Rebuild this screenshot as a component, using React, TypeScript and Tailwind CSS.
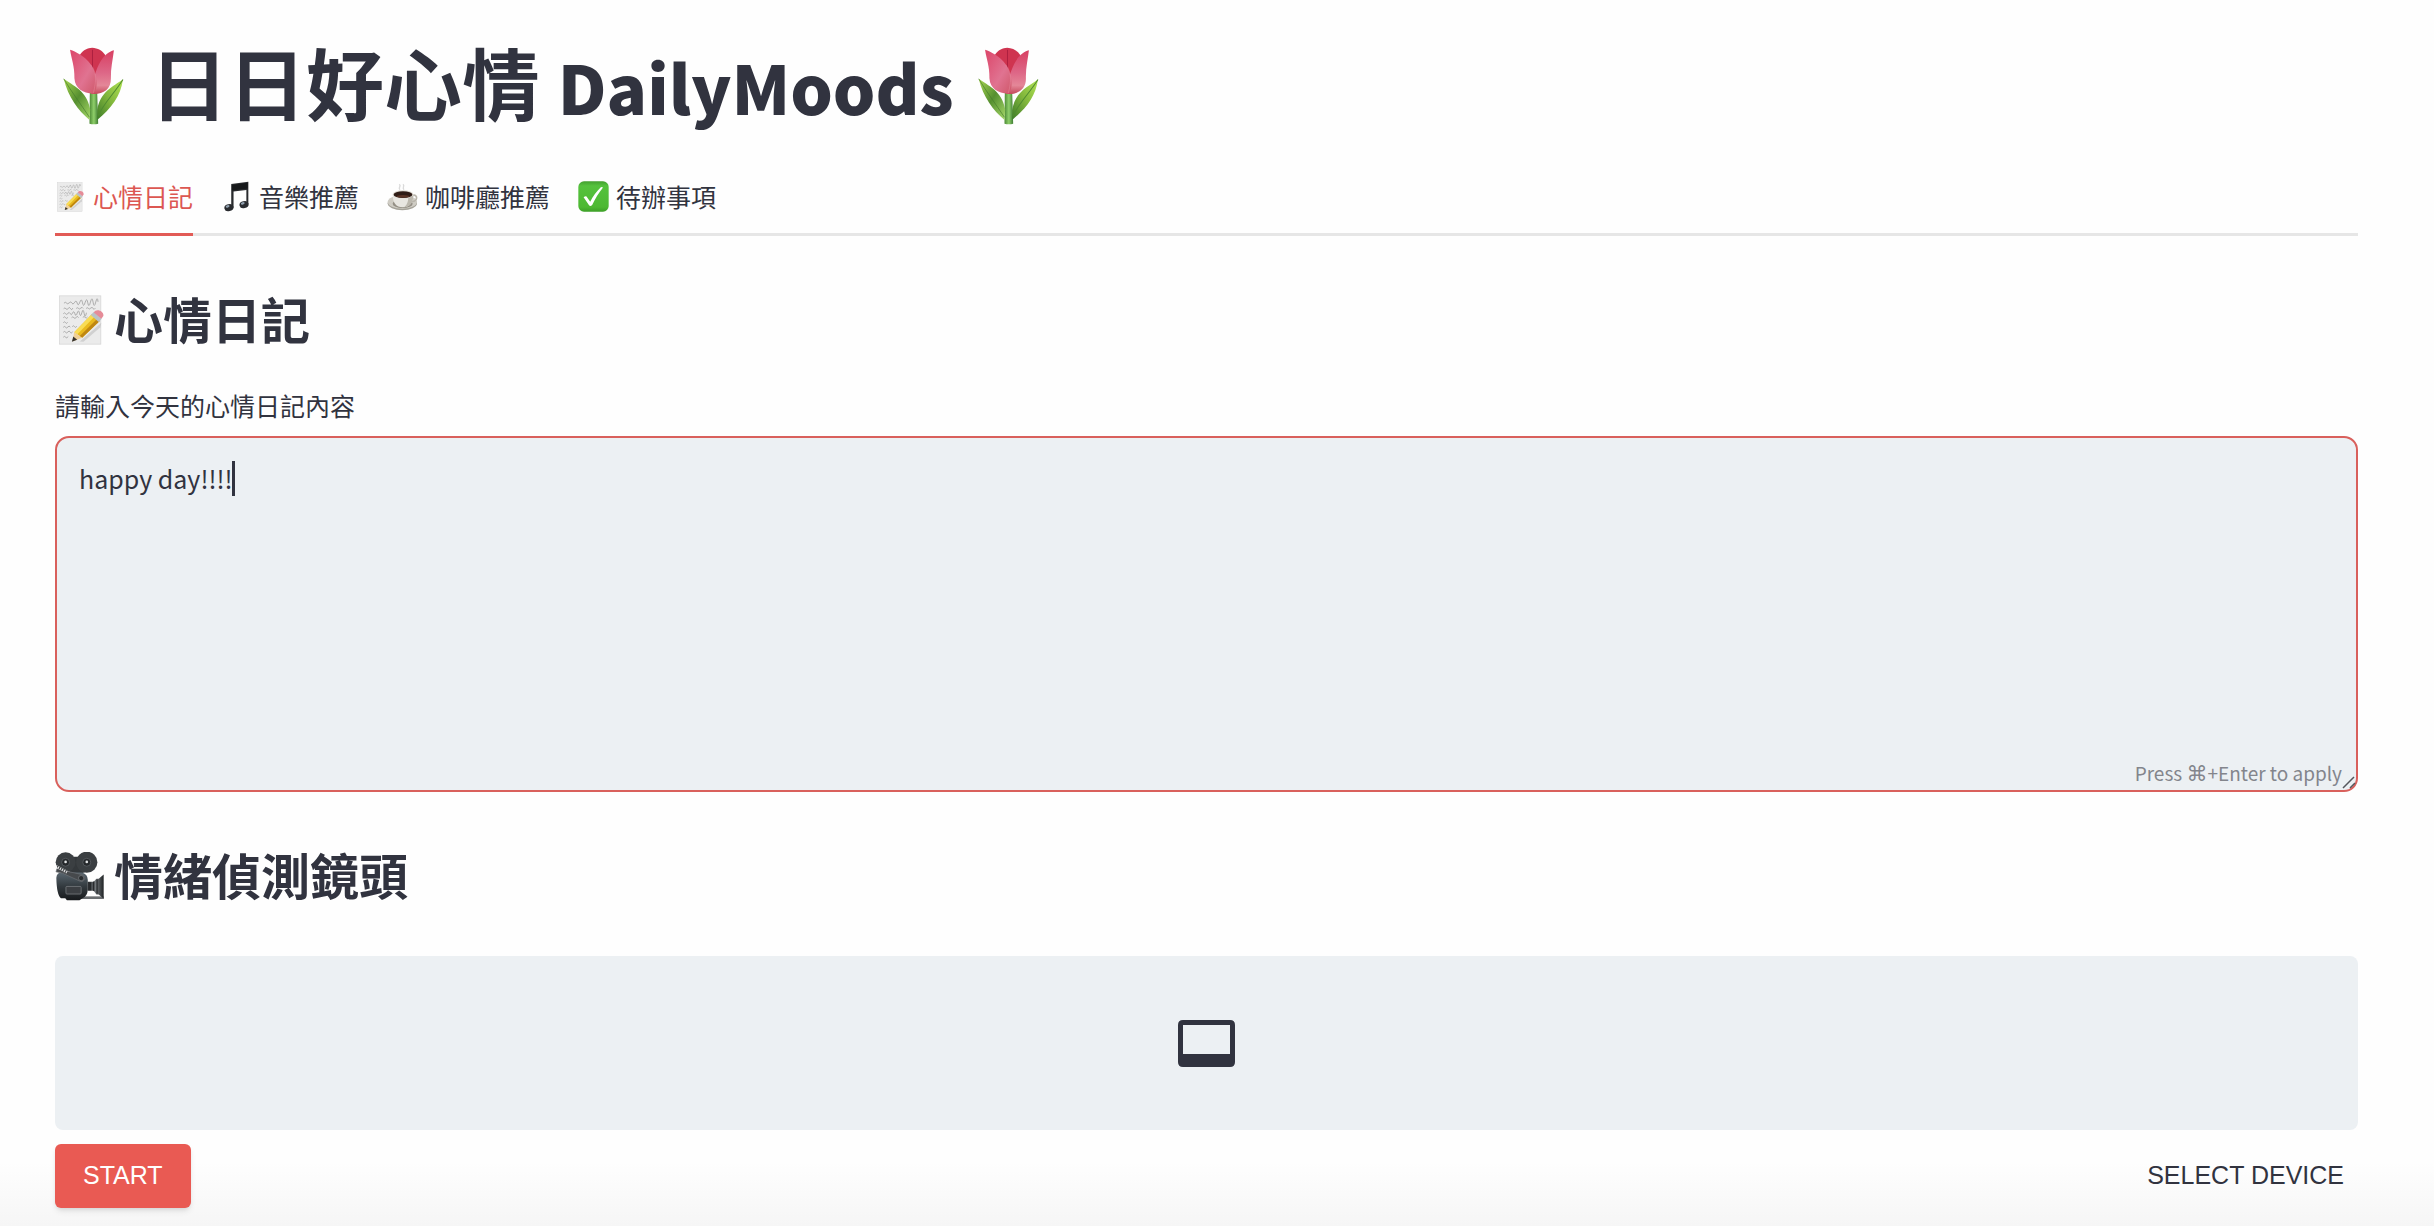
import { useState } from "react";
import type { ReactNode } from "react";

function Tulip() {
  return (
    <svg viewBox="68 52 182 233" className="h-[78px] w-[61px] shrink-0" aria-hidden="true">
      <defs>
        <linearGradient id="petal" x1="0" y1="0" x2="0" y2="1">
          <stop offset="0" stopColor="#d83f62" />
          <stop offset="0.5" stopColor="#dd6686" />
          <stop offset="0.8" stopColor="#e48798" />
          <stop offset="1" stopColor="#c4485a" />
        </linearGradient>
        <linearGradient id="petalSide" x1="0" y1="0" x2="1" y2="1">
          <stop offset="0" stopColor="#dc4569" />
          <stop offset="0.6" stopColor="#e07391" />
          <stop offset="1" stopColor="#cf5769" />
        </linearGradient>
        <linearGradient id="stem" x1="0" y1="0" x2="1" y2="0">
          <stop offset="0" stopColor="#4c8a35" />
          <stop offset="0.5" stopColor="#8fcf6a" />
          <stop offset="1" stopColor="#3f7c33" />
        </linearGradient>
        <linearGradient id="leafL" x1="0" y1="0" x2="1" y2="1">
          <stop offset="0" stopColor="#a9d752" />
          <stop offset="0.5" stopColor="#568f30" />
          <stop offset="1" stopColor="#a5d868" />
        </linearGradient>
        <linearGradient id="leafR" x1="1" y1="0" x2="0" y2="1">
          <stop offset="0" stopColor="#b2e455" />
          <stop offset="0.5" stopColor="#82b73c" />
          <stop offset="1" stopColor="#3e7c2a" />
        </linearGradient>
      </defs>
      <path d="M148 188h22l3 93q-13 4-26 0z" fill="url(#stem)" />
      <path d="M70 147C98 168 139 182 149 238L147 270C112 240 84 203 70 147z" fill="url(#leafL)" />
      <path d="M70 147C94 187 120 221 147 262" fill="none" stroke="#477d2c" strokeWidth="2" />
      <path d="M247 149C217 170 179 186 170 240V270C213 234 240 199 247 149z" fill="url(#leafR)" />
      <path d="M247 149C222 190 190 218 172 259" fill="none" stroke="#4f8b30" strokeWidth="3" />
      <path d="M118 76C130 58 141 56 155 54C172 55 185 62 194 76L188 150H130z" fill="#cf3450" />
      <path d="M156 60V128" stroke="#ae2141" strokeWidth="3" fill="none" />
      <path d="M220 62C190 70 165 103 151 192C184 196 212 180 211 146C210 116 217 89 220 62z" fill="url(#petal)" />
      <path d="M89 60C126 73 161 99 167 148C171 173 164 190 157 191C128 190 104 176 102 145C103 109 93 88 89 60z" fill="url(#petalSide)" />
      <path d="M151 105C161 118 166 132 165 151C164 170 160 184 158 190" fill="none" stroke="#f0a1b2" strokeWidth="1" />
    </svg>
  );
}

function Memo({ className }: { className: string }) {
  return (
    <svg viewBox="56 46 136 150" className={className} aria-hidden="true">
      <rect x="57.500" y="48" width="125" height="146" fill="#ebebeb" stroke="#d2d2d2" strokeWidth="2" />
      <g fill="none" stroke="#8d8d8d" strokeWidth="2">
        <path d="M71 70q5-5 8 0t8-1 8 1 8-2 8 2 8-3 8 2 8-1 8 1 8-2 8 0 8 0 7-1" />
        <path d="M70 87q4-5 7 0t7-1 7 1 7-2M108 86q4-4 7 0t7-1 7 1M138 86q4-4 7 0t7-1 7 1 7-1" />
        <path d="M69 102q4-5 7 0t7-1 7 1 7-2 7 2 7-2 7 1 7-2 7 2 7-2" />
        <path d="M69 114q4-5 7 0t7-1M94 114q4-5 7 0t7-1 7 1M128 113q4-5 7 0t7-1" />
        <path d="M69 129q4-5 7 0t6-1M96 141q4-5 7 0t7-1" />
        <path d="M69 143q4-5 7 0t7-1 7 1" />
        <path d="M69 158q4-5 7 0t7-1 7 1 7-2" />
        <path d="M69 173q4-5 7 0t8-2" />
      </g>
      <path d="M119 186L184 129L181 143L130 187z" fill="#b9b9b9" opacity=".55" />
      <path d="M102 158L155 104L179 124L126 175z" fill="#e9b91e" />
      <path d="M102 158L155 104L163 111L111 165z" fill="#f8dc55" />
      <path d="M118 170L171 118L179 124L126 175z" fill="#bf8712" />
      <path d="M102 158L126 175L97 186z" fill="#efcf97" />
      <path d="M95 187L99 171L111 181z" fill="#38332d" />
      <path d="M152 106L161 97L185 117L176 127z" fill="#b9c2c6" />
      <path d="M161 98C169 84 193 94 190 109L184 117z" fill="#e58c98" />
    </svg>
  );
}

function MusicNote() {
  return (
    <svg viewBox="551 50 76 92" className="h-[31px] w-[25px]" aria-hidden="true">
      <path d="M573 58L625 51V119H619V76L580 81V130H573z" fill="#292b2e" />
      <path d="M575 61L623 54V72L575 78z" fill="#16181a" />
      <ellipse cx="566" cy="130" rx="14" ry="10.500" transform="rotate(-14 566 130)" fill="#292b2f" />
      <ellipse cx="612" cy="121" rx="14" ry="10.500" transform="rotate(-14 612 121)" fill="#292b2f" />
      <ellipse cx="562" cy="126" rx="6" ry="3.500" transform="rotate(-20 562 126)" fill="#91a1b0" />
      <ellipse cx="608" cy="117" rx="6" ry="3.500" transform="rotate(-20 608 117)" fill="#91a1b0" />
    </svg>
  );
}

function Coffee() {
  return (
    <svg viewBox="22 50 93 84" className="h-[28px] w-[31px]" aria-hidden="true">
      <g fill="none" stroke="#dadada" strokeWidth="4">
        <path d="M61 70C53 62 67 62 59 54M73 70C66 63 77 60 70 54" />
      </g>
      <ellipse cx="68" cy="111" rx="44" ry="21" fill="#a5a299" />
      <ellipse cx="68" cy="107" rx="44" ry="20" fill="#cfccc4" />
      <ellipse cx="69" cy="112" rx="30" ry="13" fill="#948f85" />
      <path d="M100 87C115 83 115 106 96 105" fill="none" stroke="#b9b5ab" strokeWidth="5" />
      <path d="M39 84C39 110 49 123 69 123S101 110 101 84z" fill="#e8e6e1" />
      <path d="M86 91L101 86C101 109 91 122 72 123C81 118 86 106 86 91z" fill="#bcb8ae" />
      <ellipse cx="70" cy="84" rx="31" ry="12" fill="#dedad2" />
      <ellipse cx="70" cy="85" rx="28" ry="10" fill="#2f1c16" />
      <ellipse cx="70" cy="90" rx="20" ry="4" fill="#5a3426" />
    </svg>
  );
}

function CheckMark() {
  return (
    <svg viewBox="593 50 94 94" className="size-[31px]" aria-hidden="true">
      <defs>
        <linearGradient id="tick" x1="0" y1="0" x2="0" y2="1">
          <stop offset="0" stopColor="#43a02f" />
          <stop offset=".15" stopColor="#55c23d" />
          <stop offset=".85" stopColor="#4db832" />
          <stop offset="1" stopColor="#3c9f27" />
        </linearGradient>
      </defs>
      <rect x="594" y="51" width="92" height="92" rx="17" fill="url(#tick)" />
      <path d="M610 99C616 95 619 96 621 100L630 113C638 96 649 82 663 68L669 70C655 87 645 105 636 123Q630 129 626 123z" fill="#fff" />
    </svg>
  );
}

function MovieCamera() {
  return (
    <svg viewBox="46 214 148 148" className="size-[49px]" aria-hidden="true">
      <defs>
        <linearGradient id="body" x1="0" y1="0" x2="0" y2="1">
          <stop offset="0" stopColor="#59666f" />
          <stop offset=".5" stopColor="#333a3f" />
          <stop offset="1" stopColor="#17191c" />
        </linearGradient>
        <linearGradient id="lens" x1="0" y1="0" x2="1" y2="0">
          <stop offset="0" stopColor="#25282b" />
          <stop offset=".5" stopColor="#72777b" />
          <stop offset="1" stopColor="#1f2224" />
        </linearGradient>
      </defs>
      <rect x="115" y="348" width="78" height="8" fill="#6a6d70" />
      <path d="M76 228H142V273L110 284L76 266z" fill="#34383b" />
      <circle cx="78" cy="245" r="30" fill="#3b3f42" />
      <circle cx="142" cy="245" r="32" fill="#3b3f42" />
      <g fill="#25282b" stroke="#666b6f" strokeWidth="2">
        <circle cx="78" cy="245" r="12" />
        <circle cx="142" cy="245" r="12" />
      </g>
      <circle cx="78" cy="244" r="4" fill="#e1e3e4" />
      <circle cx="142" cy="244" r="4" fill="#e1e3e4" />
      <path d="M50 292Q51 276 67 276H128Q145 282 145 298V328Q144 347 129 354L120 360H82L77 354H64Q51 344 50 292z" fill="url(#body)" />
      <path d="M52 264L68 269L126 282Q138 285 136 297Q131 306 121 302L69 278L49 274z" fill="#46494c" stroke="#6d7175" strokeWidth="2" />
      <path d="M49 257L82 275" stroke="#f3f3f3" strokeWidth="9" strokeDasharray="3 4" />
      <circle cx="125" cy="293" r="8" fill="#292c2f" stroke="#80858a" strokeWidth="2" />
      <rect x="79" y="318" width="46" height="23" rx="3" fill="#3c3f43" stroke="#85888b" strokeWidth="2" />
      <path d="M145 304H163L171 295H178L193 282V355L178 342H171L163 331H145z" fill="url(#lens)" />
      <path d="M152 306V330M163 303V332M173 297V340" stroke="#191b1d" strokeWidth="3" />
    </svg>
  );
}

const tabs: { label: string; icon: ReactNode }[] = [
  { label: "心情日記", icon: <Memo className="h-[30px] w-[27px]" /> },
  { label: "音樂推薦", icon: <MusicNote /> },
  { label: "咖啡廳推薦", icon: <Coffee /> },
  { label: "待辦事項", icon: <CheckMark /> },
];

export default function App() {
  const [active, setActive] = useState(0);
  const [text, setText] = useState("happy day!!!!");

  return (
    <main
      lang="zh-Hant"
      className="min-h-screen bg-[linear-gradient(to_top,#f6f6f6,#fefefe_64px)] pt-8 pr-[76px] pb-4 pl-[55px] font-['Noto_Sans_CJK_TC',sans-serif] text-[#31333f]"
    >
      <h1 className="flex h-[104px] items-start pl-2 text-[78px] leading-[98px] font-bold whitespace-nowrap">
        <span className="flex h-[108px] items-center">
          <Tulip />
        </span>
        <span className="ml-[26px]">
          日日好心情 <span className="text-[67px] font-black">DailyMoods</span>
        </span>
        <span className="ml-6 flex h-[108px] items-center">
          <Tulip />
        </span>
      </h1>

      <div role="tablist" className="mt-7 flex gap-7 border-b-3 border-[#e6e6e6]">
        {tabs.map((tab, i) => (
          <button
            key={tab.label}
            type="button"
            role="tab"
            aria-selected={i === active}
            onClick={() => setActive(i)}
            className={
              i === active
                ? "-mb-[3px] flex h-[72px] items-center gap-[7px] border-b-3 border-[#e25b56] pb-1 text-[25px] text-[#dc5752]"
                : "-mb-[3px] flex h-[72px] items-center gap-[7px] border-b-3 border-transparent pb-1 text-[25px]"
            }
          >
            <span className="flex w-[31px] justify-center">{tab.icon}</span>
            {tab.label}
          </button>
        ))}
      </div>

      <h2 className="mt-[47px] flex h-[70px] items-center gap-[10px] text-[49px] leading-[70px] font-bold">
        <span className="flex w-[49px] justify-end pt-1">
          <Memo className="h-[50px] w-[45px]" />
        </span>
        心情日記
      </h2>

      <label htmlFor="diary" className="mt-[33px] block text-[25px] leading-[38px]">
        請輸入今天的心情日記內容
      </label>
      <div className="relative mt-3">
        <textarea
          id="diary"
          value={text}
          onChange={(e) => setText(e.target.value)}
          className="block h-[356px] w-full resize-none rounded-[14px] border-2 border-[#d9605c] bg-[#ecf0f3] px-[22px] py-5 text-[25px] leading-[40px] outline-none"
        />
        <span className="absolute top-[25px] left-[177px] h-[35px] w-[3px] bg-[#31333f]" />
        <span className="absolute right-4 bottom-[5px] text-[19px] leading-7 text-[#83858c]">
          Press <span className="font-['DejaVu_Sans',sans-serif] text-[21px] leading-none">⌘</span>+Enter to apply
        </span>
        <svg viewBox="0 0 14 14" className="absolute right-[2px] bottom-[2px] size-[14px]" aria-hidden="true">
          <path d="M1 12L12 1M8 12L13 7" stroke="#55575c" strokeWidth="1.500" fill="none" />
        </svg>
      </div>

      <h2 className="mt-[47px] flex h-[70px] items-center gap-[10px] text-[49px] leading-[70px] font-bold">
        <span className="pt-1">
          <MovieCamera />
        </span>
        情緒偵測鏡頭
      </h2>

      <section className="mt-[47px] flex h-[174px] items-center justify-center rounded-lg bg-[#ecf0f3]">
        <svg viewBox="0 0 57 47" className="h-[47px] w-[57px]" aria-label="video">
          <path
            fillRule="evenodd"
            fill="#31333f"
            d="M5 0H52Q57 0 57 5V42Q57 47 52 47H5Q0 47 0 42V5Q0 0 5 0zM5 5V34H52V5z"
          />
        </svg>
      </section>

      <div className="mt-[14px] flex items-center justify-between font-['Liberation_Sans',sans-serif] text-[25px]">
        <button type="button" className="h-16 rounded-md bg-[#e95a53] px-7 text-white shadow-md">
          START
        </button>
        <button type="button" className="h-16 px-[14px]">
          SELECT DEVICE
        </button>
      </div>
    </main>
  );
}
